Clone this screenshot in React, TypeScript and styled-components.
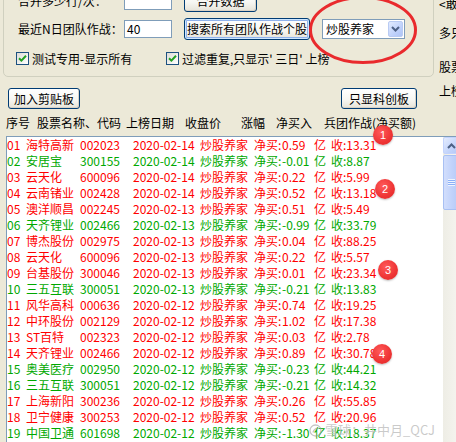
import React from 'react';
import styled, { createGlobalStyle, css } from 'styled-components';

const RED = '#ff0000';
const GREEN = '#00a800';

const GlobalStyle = createGlobalStyle`
  html, body {
    margin: 0;
    padding: 0;
  }
  body {
    background: #ece9d8;
    font-family: "Noto Sans CJK SC", "Liberation Sans", sans-serif;
    font-size: 12px;
    color: #000;
    overflow: hidden;
  }
`;

const Window = styled.div`
  position: relative;
  width: 456px;
  height: 442px;
  overflow: hidden;
  background: #ece9d8;
`;

const TopArea = styled.div`
  display: flex;
  height: 110px;
`;

const MainColumn = styled.div`
  width: 434px;
  flex-shrink: 0;
  display: flex;
  flex-direction: column;
`;

const GroupBox = styled.div`
  box-sizing: border-box;
  width: 431px;
  margin: -20px 0 0 3px;
  padding: 9px 0 9px 14px;
  border: 1px solid #d0d0bf;
  border-radius: 5px;
  display: flex;
  flex-direction: column;
`;

const FormRow = styled.div<{ $gap?: number }>`
  display: flex;
  align-items: center;
  height: 22px;
  margin-top: ${(p) => p.$gap ?? 0}px;
`;

const FieldLabel = styled.span`
  width: 106px;
  line-height: 16px;
  white-space: nowrap;
`;

const TextInput = styled.div`
  box-sizing: border-box;
  width: 48px;
  height: 18px;
  padding: 0 2px;
  border: 1px solid #7f9db9;
  background: #fff;
  line-height: 16px;
`;

const XpButton = styled.button<{ $width: number; $height?: number; $focused?: boolean }>`
  box-sizing: border-box;
  width: ${(p) => p.$width}px;
  height: ${(p) => p.$height ?? 22}px;
  margin: 0;
  padding: 0;
  border: 1px solid #003c74;
  border-radius: 3px;
  background: linear-gradient(to bottom, #ffffff 0%, #f7f7f3 55%, #e6e3d8 100%);
  box-shadow: inset -1px -1px 0 #d8d2c6;
  font-family: inherit;
  font-size: 12px;
  line-height: 16px;
  color: #000;
  white-space: nowrap;
  ${(p) =>
    p.$focused &&
    css`
      box-shadow: inset 0 0 0 1px #cee7ff, inset 0 0 0 2px #8fb2ec;
    `}
`;

const Gap = styled.span<{ $w: number }>`
  display: inline-block;
  width: ${(p) => p.$w}px;
  flex-shrink: 0;
`;

const Select = styled.div`
  box-sizing: border-box;
  width: 83px;
  height: 20px;
  border: 1px solid #7f9db9;
  background: #fff;
  display: flex;
  align-items: center;
  justify-content: space-between;
  padding: 0 1px 0 3px;
`;

const SelectValue = styled.span`
  line-height: 16px;
`;

const SelectArrow = styled.span`
  box-sizing: border-box;
  width: 15px;
  height: 16px;
  border: 1px solid #b9cbf3;
  border-radius: 2px;
  background: linear-gradient(135deg, #e1eafe 0%, #c0d2fb 60%, #aec4f6 100%);
  display: flex;
  align-items: center;
  justify-content: center;
`;

const CheckRow = styled.div`
  display: flex;
  align-items: center;
  height: 17px;
  margin-top: 10px;
`;

const CheckItem = styled.label<{ $width?: number; $shift?: number }>`
  display: flex;
  align-items: center;
  gap: 3px;
  width: ${(p) => (p.$width ? `${p.$width}px` : 'auto')};
  margin-left: ${(p) => p.$shift ?? 0}px;
  white-space: nowrap;
  line-height: 16px;
`;

const CheckBox = styled.span`
  box-sizing: border-box;
  width: 13px;
  height: 13px;
  border: 1px solid #1c5180;
  background: linear-gradient(135deg, #dcdcd7 0%, #ffffff 100%);
  display: flex;
  align-items: center;
  justify-content: center;
  flex-shrink: 0;
`;

const Toolbar = styled.div`
  display: flex;
  justify-content: space-between;
  margin-top: 11px;
  padding: 0 17px 0 8px;
`;

const RightStrip = styled.div`
  flex: 1;
  overflow: hidden;
  padding-left: 5px;
  display: flex;
  flex-direction: column;
`;

const StripLabel = styled.span<{ $top: number }>`
  margin-top: ${(p) => p.$top}px;
  line-height: 16px;
  white-space: nowrap;
`;

const HeaderRow = styled.div`
  height: 26px;
  padding-left: 6px;
  display: grid;
  grid-template-columns: 31px 89px 59px 56px 35px 48px auto;
  align-items: center;
  white-space: nowrap;
  line-height: 16px;
`;

const ListBox = styled.div`
  box-sizing: border-box;
  margin-left: 6px;
  width: 455px;
  height: 320px;
  border: 1px solid #7f9db9;
  background: #fff;
  display: flex;
`;

const Rows = styled.div`
  width: 436px;
  flex-shrink: 0;
`;

const Row = styled.div<{ $color: string }>`
  display: grid;
  grid-template-columns: 19px 54px 53px 67px 54px 28px 32px 17px auto;
  height: 16px;
  line-height: 16px;
  color: ${(p) => p.$color};
  white-space: nowrap;
`;

const ScrollBar = styled.div`
  width: 17px;
  flex-shrink: 0;
  background: linear-gradient(to right, #eeede5, #f6f5f0);
  display: flex;
  flex-direction: column;
`;

const ScrollButton = styled.div`
  box-sizing: border-box;
  height: 17px;
  border: 1px solid #c3d3fd;
  border-radius: 2px;
  background: linear-gradient(135deg, #e4ecfe 0%, #c3d4fb 60%, #b2c7f6 100%);
  display: flex;
  align-items: center;
  justify-content: center;
`;

const ScrollThumb = styled.div`
  box-sizing: border-box;
  height: 55px;
  margin-top: 1px;
  border: 1px solid #a8c0f3;
  border-radius: 2px;
  background: linear-gradient(to right, #d2defc 0%, #c2d3fb 50%, #b4c9f7 100%);
  display: flex;
  align-items: center;
  justify-content: center;
`;

const Grip = styled.div`
  width: 7px;
  height: 7px;
  background: repeating-linear-gradient(
    to bottom,
    #eef4fe 0px,
    #eef4fe 1px,
    #8cb0f8 1px,
    #8cb0f8 2px
  );
`;

const Badge = styled.div<{ $x: number; $y: number }>`
  position: absolute;
  left: ${(p) => p.$x - 10}px;
  top: ${(p) => p.$y - 10}px;
  width: 20px;
  height: 20px;
  border-radius: 50%;
  background: radial-gradient(circle at 40% 35%, #ff5a5a 0%, #ee3434 60%, #dc2a2a 100%);
  box-shadow: 0 1px 2px rgba(0, 0, 0, 0.25);
  color: #fff;
  font-family: "Liberation Sans", sans-serif;
  font-size: 11px;
  line-height: 20px;
  text-align: center;
`;

const Annotation = styled.svg`
  position: absolute;
  left: 306px;
  top: -6px;
  pointer-events: none;
`;

const Watermark = styled.div`
  position: absolute;
  left: 309px;
  top: 421px;
  display: flex;
  align-items: center;
  gap: 3px;
  color: rgba(150, 150, 150, 0.5);
  font-size: 13px;
  line-height: 18px;
  white-space: nowrap;
  text-shadow: 0 0 1px rgba(255, 255, 255, 0.8);
`;

type Pick = {
  no: string;
  name: string;
  code: string;
  date: string;
  amount: string;
  close: string;
};

const picks: Pick[] = [
  { no: '01', name: '海特高新', code: '002023', date: '2020-02-14', amount: '0.59', close: '13.31' },
  { no: '02', name: '安居宝', code: '300155', date: '2020-02-14', amount: '-0.01', close: '8.87' },
  { no: '03', name: '云天化', code: '600096', date: '2020-02-14', amount: '0.22', close: '5.99' },
  { no: '04', name: '云南锗业', code: '002428', date: '2020-02-14', amount: '0.52', close: '13.18' },
  { no: '05', name: '澳洋顺昌', code: '002245', date: '2020-02-13', amount: '0.51', close: '5.49' },
  { no: '06', name: '天齐锂业', code: '002466', date: '2020-02-13', amount: '-0.99', close: '33.79' },
  { no: '07', name: '博杰股份', code: '002975', date: '2020-02-13', amount: '0.04', close: '88.25' },
  { no: '08', name: '云天化', code: '600096', date: '2020-02-13', amount: '0.22', close: '5.57' },
  { no: '09', name: '台基股份', code: '300046', date: '2020-02-13', amount: '0.01', close: '23.34' },
  { no: '10', name: '三五互联', code: '300051', date: '2020-02-13', amount: '-0.21', close: '13.83' },
  { no: '11', name: '风华高科', code: '000636', date: '2020-02-12', amount: '0.74', close: '19.25' },
  { no: '12', name: '中环股份', code: '002129', date: '2020-02-12', amount: '1.02', close: '17.38' },
  { no: '13', name: 'ST百特', code: '002323', date: '2020-02-12', amount: '0.03', close: '2.78' },
  { no: '14', name: '天齐锂业', code: '002466', date: '2020-02-12', amount: '0.89', close: '30.78' },
  { no: '15', name: '奥美医疗', code: '002950', date: '2020-02-12', amount: '-0.23', close: '44.21' },
  { no: '16', name: '三五互联', code: '300051', date: '2020-02-12', amount: '-0.21', close: '14.32' },
  { no: '17', name: '上海新阳', code: '300236', date: '2020-02-12', amount: '0.26', close: '55.85' },
  { no: '18', name: '卫宁健康', code: '300253', date: '2020-02-12', amount: '0.52', close: '20.96' },
  { no: '19', name: '中国卫通', code: '601698', date: '2020-02-12', amount: '-1.30', close: '18.37' },
];

const badges = [
  { n: 1, x: 383, y: 135 },
  { n: 2, x: 385, y: 189 },
  { n: 3, x: 388, y: 270 },
  { n: 4, x: 382, y: 354 },
];

const CheckMark = () => (
  <svg width="9" height="9" viewBox="0 0 9 9">
    <path d="M1 4.2 L3.4 6.6 L8 1.8" fill="none" stroke="#21a121" strokeWidth="2" />
  </svg>
);

const Chevron = ({ up }: { up?: boolean }) => (
  <svg width="9" height="6" viewBox="0 0 9 6">
    <path
      d={up ? 'M1 5 L4.5 1.5 L8 5' : 'M1 1 L4.5 4.5 L8 1'}
      fill="none"
      stroke="#4d6185"
      strokeWidth="2"
    />
  </svg>
);

const SnowballLogo = () => (
  <svg width="13" height="13" viewBox="0 0 13 13">
    <circle cx="6.5" cy="6.5" r="5.5" fill="none" stroke="rgba(150,150,150,0.55)" strokeWidth="1.3" />
    <path d="M4 8.5 C5 5 7 4 9.5 4.5" fill="none" stroke="rgba(150,150,150,0.55)" strokeWidth="1.3" />
  </svg>
);

export default function App() {
  return (
    <Window>
      <GlobalStyle />
      <TopArea>
        <MainColumn>
          <GroupBox>
            <FormRow>
              <FieldLabel>合并多少行/次：</FieldLabel>
              <TextInput />
              <Gap $w={12} />
              <XpButton $width={73}>合并数据</XpButton>
            </FormRow>
            <FormRow $gap={6}>
              <FieldLabel>最近N日团队作战：</FieldLabel>
              <TextInput>40</TextInput>
              <Gap $w={12} />
              <XpButton $width={126} $focused>
                搜索所有团队作战个股
              </XpButton>
              <Gap $w={12} />
              <Select>
                <SelectValue>炒股养家</SelectValue>
                <SelectArrow>
                  <Chevron />
                </SelectArrow>
              </Select>
            </FormRow>
            <CheckRow>
              <CheckItem $width={150} $shift={-2}>
                <CheckBox>
                  <CheckMark />
                </CheckBox>
                测试专用-显示所有
              </CheckItem>
              <CheckItem>
                <CheckBox>
                  <CheckMark />
                </CheckBox>
                过滤重复,只显示' 三日' 上榜
              </CheckItem>
            </CheckRow>
          </GroupBox>
          <Toolbar>
            <XpButton $width={72} $height={21}>
              加入剪贴板
            </XpButton>
            <XpButton $width={76} $height={21}>
              只显科创板
            </XpButton>
          </Toolbar>
        </MainColumn>
        <RightStrip>
          <StripLabel $top={-4}>&lt;敢死队</StripLabel>
          <StripLabel $top={13}>多只股票</StripLabel>
          <StripLabel $top={18}>股票代码</StripLabel>
          <StripLabel $top={8}>上榜日期</StripLabel>
        </RightStrip>
      </TopArea>

      <HeaderRow>
        <span>序号</span>
        <span>股票名称、代码</span>
        <span>上榜日期</span>
        <span>收盘价</span>
        <span>涨幅</span>
        <span>净买入</span>
        <span>兵团作战(净买额)</span>
      </HeaderRow>

      <ListBox>
        <Rows>
          {picks.map((p) => (
            <Row key={p.no} $color={p.amount.startsWith('-') ? GREEN : RED}>
              <span>{p.no}</span>
              <span>{p.name}</span>
              <span>{p.code}</span>
              <span>{p.date}</span>
              <span>炒股养家</span>
              <span>净买:</span>
              <span>{p.amount}</span>
              <span>亿</span>
              <span>收:{p.close}</span>
            </Row>
          ))}
        </Rows>
        <ScrollBar>
          <ScrollButton>
            <Chevron up />
          </ScrollButton>
          <ScrollThumb>
            <Grip />
          </ScrollThumb>
        </ScrollBar>
      </ListBox>

      <Annotation width="118" height="76" viewBox="0 0 118 76">
        <ellipse cx="57" cy="36" rx="52.5" ry="32.5" fill="none" stroke="#e92a2d" strokeWidth="3" />
      </Annotation>

      {badges.map((b) => (
        <Badge key={b.n} $x={b.x} $y={b.y}>
          {b.n}
        </Badge>
      ))}

      <Watermark>
        <SnowballLogo />
        雪球：井中月_QCJ
      </Watermark>
    </Window>
  );
}
